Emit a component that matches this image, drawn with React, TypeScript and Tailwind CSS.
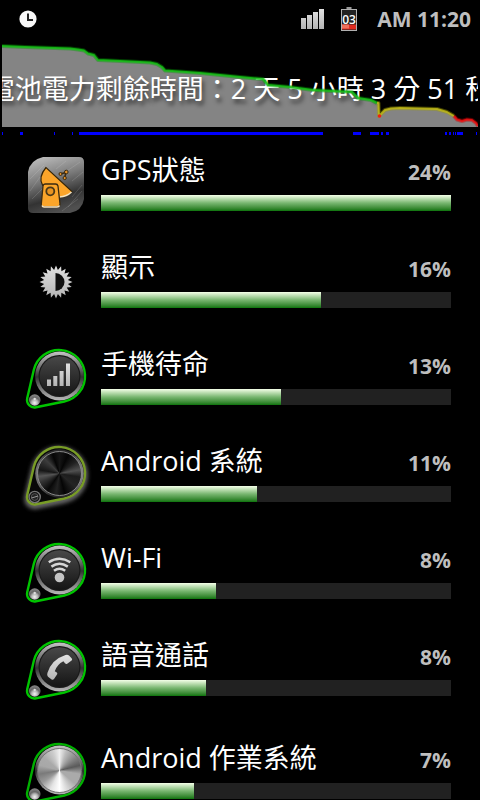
import type { ReactNode } from "react";

const OUTLINE = "M7.7 21.2A26 26 0 1 1 38.3 52.5L10 58.3A7.5 7.5 0 0 1 1.2 49.3Z";

function Gradients() {
  return (
    <svg className="absolute size-0" aria-hidden="true">
      <defs>
        <linearGradient id="ring" x1="0" y1="0" x2="0" y2="1">
          <stop offset="0" stopColor="#c4c4c4" />
          <stop offset=".3" stopColor="#777" />
          <stop offset=".52" stopColor="#333" />
          <stop offset=".75" stopColor="#777" />
          <stop offset="1" stopColor="#b8b8b8" />
        </linearGradient>
        <linearGradient id="face" x1="0" y1="0" x2="0" y2="1">
          <stop offset="0" stopColor="#484848" />
          <stop offset="1" stopColor="#151515" />
        </linearGradient>
        <linearGradient id="glyph" x1="0" y1="0" x2="0" y2="1">
          <stop offset="0" stopColor="#e2e2e2" />
          <stop offset="1" stopColor="#b4b4b4" />
        </linearGradient>
        <radialGradient id="ball" cx=".5" cy=".75" r=".75">
          <stop offset="0" stopColor="#f4f4f4" />
          <stop offset=".35" stopColor="#b4b4b4" />
          <stop offset=".6" stopColor="#666" />
          <stop offset="1" stopColor="#8a8a8a" />
        </radialGradient>
        <linearGradient id="darkRing" x1="0" y1="0" x2="1" y2="0">
          <stop offset="0" stopColor="#777" />
          <stop offset=".3" stopColor="#2a2a2a" />
          <stop offset=".7" stopColor="#2a2a2a" />
          <stop offset="1" stopColor="#8a8a8a" />
        </linearGradient>
        <linearGradient id="tile" x1=".2" y1="0" x2=".5" y2="1">
          <stop offset="0" stopColor="#bcbcbc" />
          <stop offset=".4" stopColor="#7c7c7c" />
          <stop offset=".75" stopColor="#333" />
          <stop offset="1" stopColor="#505050" />
        </linearGradient>
        <filter id="glow" x="-30%" y="-30%" width="160%" height="160%">
          <feGaussianBlur stdDeviation="2.2" />
        </filter>
      </defs>
    </svg>
  );
}

function Knob({ children }: { children: ReactNode }) {
  return (
    <svg viewBox="0 0 60 60" className="size-[60px] overflow-visible" aria-hidden="true">
      <path d={OUTLINE} fill="#000" stroke="#00c400" strokeWidth="2.4" />
      <circle cx="33.5" cy="27" r="24.4" fill="url(#ring)" />
      <circle cx="33.5" cy="27" r="21" fill="#1a1a1a" />
      <circle cx="33.5" cy="27" r="19.8" fill="url(#face)" />
      <circle cx="8.7" cy="51" r="5.8" fill="url(#ball)" />
      <circle cx="8.7" cy="50" r="1.2" fill="#ddd" />
      {children}
    </svg>
  );
}

function SignalKnob() {
  return (
    <Knob>
      <path
        d="M21 30.5h4V37h-4zM27.3 27h4v10h-4zM33.6 22h4v15h-4zM40 14.5h4V37h-4z"
        fill="url(#glyph)"
      />
    </Knob>
  );
}

function WifiKnob() {
  return (
    <Knob>
      <circle cx="33.5" cy="34.5" r="4.8" fill="#c4c4c4" />
      <g fill="none" stroke="#d6d6d6" strokeWidth="2.5">
        <path d="M22.8 19.2Q33.5 12.2 44.3 19.2" />
        <path d="M25.4 23.6Q33.5 18 41.8 23.6" />
        <path d="M28 27.8Q33.5 23.6 39.2 27.8" />
      </g>
    </Knob>
  );
}

function PhoneKnob() {
  return (
    <Knob>
      <path
        d="M39.5 15Q41.5 14.2 43 15.5L45.8 18.5Q46.6 19.8 45.6 20.6L41.2 23.8Q40 24.4 39 23.3L37.4 21.3Q31 24.5 28.8 31.3L30.8 32.6Q31.8 33.4 31 34.6L28 39Q27 40.2 25.6 39.4L22 36.8Q20.6 35.5 21.4 33Q25.5 19.5 39.5 15Z"
        fill="url(#glyph)"
      />
    </Knob>
  );
}

function DarkMetalKnob() {
  return (
    <svg viewBox="0 0 60 60" className="size-[60px] overflow-visible" aria-hidden="true">
      <path d={OUTLINE} stroke="#707070" strokeWidth="5" filter="url(#glow)" transform="translate(0 2)" />
      <path d={OUTLINE} fill="#080808" stroke="#789c26" strokeWidth="2.4" />
      <circle cx="33.5" cy="27.5" r="24.2" fill="url(#darkRing)" />
      <foreignObject x="11" y="5" width="45" height="45">
        <div className="size-full rounded-full border border-[#888] bg-[conic-gradient(#161616,#050505_25deg,#222_55deg,#505050_80deg,#1c1c1c_100deg,#242424_130deg,#050505_165deg,#222_190deg,#080808_215deg,#333_245deg,#555_262deg,#161616_280deg,#3c3c3c_315deg,#050505_340deg,#161616)]" />
      </foreignObject>
      <circle cx="8.7" cy="51" r="5.6" fill="#111" stroke="#777" strokeWidth="1.4" />
      <circle cx="8.7" cy="51" r="3.4" fill="#222" stroke="#555" />
      <path d="M5.5 52l6.5-2" stroke="#999" />
    </svg>
  );
}

function SilverKnob() {
  return (
    <svg viewBox="0 0 60 60" className="size-[60px] overflow-visible" aria-hidden="true">
      <path d={OUTLINE} fill="#000" stroke="#00b000" strokeWidth="2.4" />
      <circle cx="33.5" cy="27" r="24.4" fill="url(#ring)" />
      <foreignObject x="11" y="5" width="45" height="45">
        <div className="size-full rounded-full border border-[#777] bg-[conic-gradient(#eee,#bbb_20deg,#888_50deg,#5a5a5a_76deg,#aaa_100deg,#aaa_130deg,#ccc_150deg,#fff_180deg,#e4e4e4_205deg,#999_235deg,#7a7a7a_260deg,#a8a8a8_285deg,#aaa_310deg,#ccc_340deg,#eee)]" />
      </foreignObject>
      <circle cx="8.7" cy="51" r="5.8" fill="url(#ball)" />
    </svg>
  );
}

function GpsIcon() {
  return (
    <svg viewBox="0 0 56 56" className="size-14" aria-hidden="true">
      <path d="M15 0H51Q56 0 56 5V42Q54 54 42 56H5Q0 56 0 51V15Q2 3 15 0Z" fill="url(#tile)" />
      <g stroke="#ddd" strokeOpacity=".16" fill="none">
        <path d="M2 34L12 20M4 42L16 30M28 12L38 4M36 16L52 5M40 50L54 34M34 54L50 42M44 24L55 15M2 22L16 8M44 40L54 28" />
      </g>
      <path d="M18 10.5Q10 20 14.5 28L31 40.5Q40 40 44 34.5Z" fill="#fba52a" stroke="#332408" strokeWidth="1.2" />
      <path d="M31.5 40Q39 39.5 43.5 35" fill="none" stroke="#f3e4c4" strokeWidth="1.5" />
      <path d="M17.5 27H27.5Q29.5 27 30 29L32 47Q32 50 29 50H16Q13 50 13.3 47L15 29Q15.3 27 17.5 27Z" fill="#fba52a" stroke="#3a2a10" strokeWidth="1.3" />
      <path d="M14 48.5Q14.5 50 16 50H29Q31 50 31.5 48.5" fill="none" stroke="#f7e6c6" strokeWidth="1.5" />
      <circle cx="22.3" cy="34.3" r="4" fill="#e89422" stroke="#4a3818" strokeWidth="1.8" />
      <path d="M32 17L38 15.5M36.5 21L38 15.5" stroke="#3a2a10" strokeWidth="1.5" />
      <g fill="#e89428" stroke="#3a2a10" strokeWidth="1">
        <circle cx="32.5" cy="17" r="1.5" />
        <circle cx="38.3" cy="15" r="1.8" />
        <circle cx="36.7" cy="21" r="1.6" />
      </g>
    </svg>
  );
}

const RAYS = Array.from({ length: 40 }, (_, i) => {
  const angle = (i * Math.PI) / 20 - Math.PI / 2;
  const radius = i % 2 === 0 ? 16.5 : 12;
  return `${(17 + radius * Math.cos(angle)).toFixed(1)},${(17 + radius * Math.sin(angle)).toFixed(1)}`;
}).join(" ");

function DisplayIcon() {
  return (
    <svg viewBox="0 0 34 34" className="size-[34px]" aria-hidden="true">
      <polygon points={RAYS} fill="url(#glyph)" />
      <path d="M16.5 8A9 9 0 0 1 16.5 26Z" fill="#111" />
    </svg>
  );
}

type Usage = { name: string; percent: number; fill: number; icon: ReactNode };

const USAGES: Usage[] = [
  { name: "GPS狀態", percent: 24, fill: 350, icon: <GpsIcon /> },
  { name: "顯示", percent: 16, fill: 220, icon: <DisplayIcon /> },
  { name: "手機待命", percent: 13, fill: 180, icon: <SignalKnob /> },
  { name: "Android 系統", percent: 11, fill: 156, icon: <DarkMetalKnob /> },
  { name: "Wi-Fi", percent: 8, fill: 115, icon: <WifiKnob /> },
  { name: "語音通話", percent: 8, fill: 105, icon: <PhoneKnob /> },
  { name: "Android 作業系統", percent: 7, fill: 93, icon: <SilverKnob /> },
];

function UsageRow({ usage }: { usage: Usage }) {
  return (
    <li className="flex h-[97px] shrink-0 pr-[29px] last:mt-1.5">
      <div className="flex w-[101px] shrink-0 items-center justify-center pb-0.5 pl-[11px]">
        {usage.icon}
      </div>
      <div className="min-w-0 flex-1">
        <div className="flex h-[58px] items-end justify-between">
          <h2 className="pb-[5px] text-[27px] leading-10">{usage.name}</h2>
          <span className="pb-[9px] text-[21px] leading-7 font-bold text-[#bebebe]">{usage.percent}%</span>
        </div>
        <div
          role="progressbar"
          aria-label={usage.name}
          aria-valuenow={usage.percent}
          className="h-4 bg-[#212121]"
        >
          <div
            className="h-full bg-linear-to-b from-[#f4ffe8] via-[#78b670] to-[#087408]"
            style={{ width: `${(usage.fill / 350) * 100}%` }}
          />
        </div>
      </div>
    </li>
  );
}

function StatusBar() {
  return (
    <header className="flex h-10 shrink-0 items-center pr-[9px] pb-0.5 pl-[19px]">
      <svg viewBox="0 0 18 18" className="size-[18px]" aria-hidden="true">
        <circle cx="9" cy="9" r="8.6" fill="#f8f8f8" />
        <path d="M9 3.5V10H14" fill="none" stroke="#222" strokeWidth="2" />
      </svg>
      <svg viewBox="0 0 24 20" className="ml-auto h-5 w-6" aria-hidden="true">
        <path d="M0 9h5v11H0zM6 6h5v14H6zM12 3h5v17h-5zM18 0h5v20h-5z" fill="url(#glyph)" />
      </svg>
      <svg viewBox="0 0 16 24" className="ml-4 h-6 w-4" aria-hidden="true">
        <rect x="5.5" y="0" width="5" height="3" fill="#999" />
        <rect x=".5" y="2.5" width="15" height="21" fill="#222" stroke="#b0b0b0" />
        <rect x="1" y="17.5" width="14" height="5" fill="#e02c20" />
        <rect x="1" y="17.5" width="7" height="4" fill="#f0705c" />
        <text x="8" y="16.5" textAnchor="middle" fontSize="12" fontWeight="600" fill="#fff">
          03
        </text>
      </svg>
      <time className="ml-5 text-[21px] leading-7 font-bold text-[#bebebe]">AM 11:20</time>
    </header>
  );
}

const GREEN_LINE =
  "2,46 25,47 70,48.5 78,49.5 84,50.5 88,53.5 94,55 98,60 120,61 150,62.5 157,64 162,67 165,70.5 200,73 240,77 263,79 268,85 290,87 313,90 352,92 358,98 371,100 377,103";
const YELLOW_LINE = "377,103 378.5,103 379,116 385,110 391,108.5 400,108 437,109 447,112 454,116";
const RED_LINE = "454,116 457,119.5 462,121 467,119.5 472,120 476,123 478,126";

const ACTIVE_SPANS = [
  [2, 1], [20, 3], [54, 1], [72, 1], [79, 244], [353, 8], [370, 9], [381, 2],
  [386, 3], [445, 2], [449, 2], [453, 1], [455, 1], [457, 6], [476, 1],
];

function BatteryChart() {
  return (
    <section className="shrink-0 px-0.5">
      <div className="relative h-[87px] overflow-hidden">
        <svg viewBox="2 40 476 87" preserveAspectRatio="none" className="absolute inset-0 size-full" aria-hidden="true">
          <polygon points={`2,127 ${GREEN_LINE} ${YELLOW_LINE} ${RED_LINE} 478,127`} fill="#848484" />
        </svg>
        <div className="absolute inset-0 flex items-center justify-center pt-2.5">
          <h1 className="shrink-0 text-[27px] leading-10 whitespace-nowrap [text-shadow:2px_4px_4px_rgb(0_0_0/0.6)]">
            電池電力剩餘時間：2 天 5 小時 3 分 51 秒
          </h1>
        </div>
        <svg viewBox="2 40 476 87" preserveAspectRatio="none" className="absolute inset-0 size-full" aria-hidden="true">
          <g fill="none" strokeLinejoin="round">
            <g strokeWidth="4" strokeOpacity=".4">
              <polyline points={GREEN_LINE} stroke="#00a000" />
              <polyline points={YELLOW_LINE} stroke="#a0a000" />
              <polyline points={RED_LINE} stroke="#d00000" />
            </g>
            <g strokeWidth="2" strokeOpacity=".85">
              <polyline points={GREEN_LINE} stroke="#18c018" />
              <polyline points={YELLOW_LINE} stroke="#c0b818" />
              <polyline points={RED_LINE} stroke="#f01010" />
            </g>
            <circle cx="379.5" cy="116" r="1.8" fill="#f02010" />
          </g>
        </svg>
      </div>
      <svg viewBox="2 0 476 3" preserveAspectRatio="none" className="mt-[5px] mb-0.5 block h-[3px] w-full" aria-hidden="true">
        {ACTIVE_SPANS.map(([x, width]) => (
          <rect key={x} x={x} y="0" width={width} height="3" fill="#0000ff" />
        ))}
      </svg>
    </section>
  );
}

export default function App() {
  return (
    <main
      lang="zh-Hant"
      className="flex h-screen flex-col overflow-hidden bg-black font-['Open_Sans','Noto_Sans_CJK_TC',sans-serif] text-white"
    >
      <Gradients />
      <StatusBar />
      <BatteryChart />
      <ul className="flex min-h-0 flex-1 flex-col overflow-hidden">
        {USAGES.map((usage) => (
          <UsageRow key={usage.name} usage={usage} />
        ))}
      </ul>
    </main>
  );
}
